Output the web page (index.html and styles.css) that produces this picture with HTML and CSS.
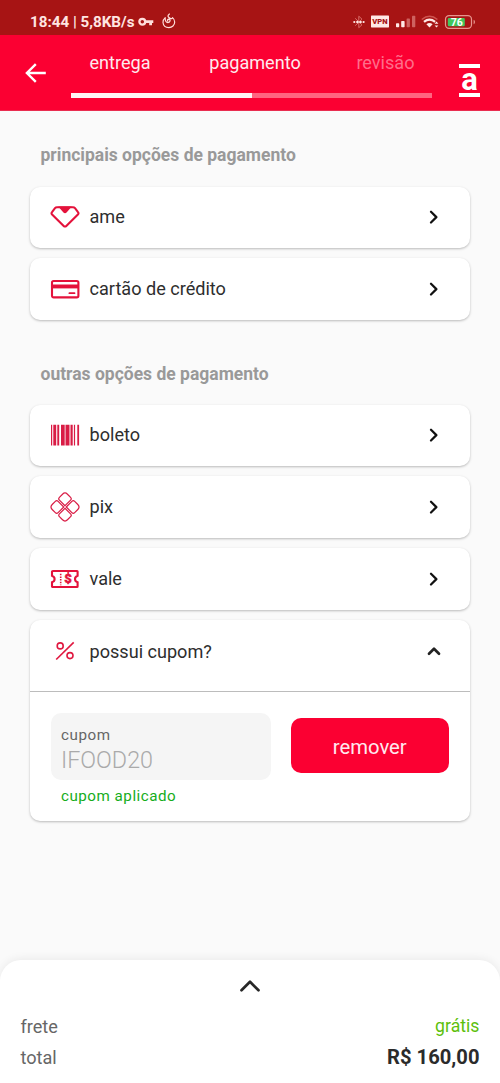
FILE: index.html
```html
<!DOCTYPE html>
<html lang="pt-BR">
<head>
<meta charset="utf-8">
<title>pagamento</title>
<link rel="stylesheet" href="styles.css">
</head>
<body>
<div class="screen">
  <div class="status">
    <span class="status-text">18:44 | 5,8KB/s</span>
    <svg class="key" width="16" height="10" viewBox="0 0 16 10"><path d="M7.6 3.3H15.3V6H14V8.2H11.2V6H7.6" fill="#ffdedb"/><circle cx="4.3" cy="4.7" r="2.9" fill="none" stroke="#ffdedb" stroke-width="2.3"/></svg>
    <svg class="flame" width="14" height="16" viewBox="0 0 14 16" fill="none" stroke="#ffdedb" stroke-width="1.2" stroke-linecap="round" stroke-linejoin="round"><path d="M7.4 1C5 2.8 5.8 4.2 8.6 5.6M3.2 4.6C1.6 6 .8 7.6 1 9.5 1.3 12.6 3.6 14.6 6.9 14.6c3.2 0 5.8-2.3 5.8-5.5 0-2.2-1-3.5-2.2-4.5-.2 1-.8 1.3-1.9 1M3.2 4.6C3 7.6 4 9.6 6 9.6c2.4 0 2.9-3.2.8-3.4-1.2 0-1.7 1-1 1.8"/></svg>
    <svg class="signals" width="124" height="18" viewBox="0 0 124 18">
      <path d="M2.2 5.3 9 11.8 5.8 14.7V3.2L9 6.2 2.2 12.7" fill="none" stroke="#d86a66" stroke-width="1"/>
      <g fill="#ffe9e6"><circle cx="1.3" cy="9" r="1.1"/><circle cx="4.4" cy="9" r="1.3"/><circle cx="7.5" cy="9" r="1.3"/><circle cx="10.6" cy="9" r="1.1"/>
      <rect x="18" y="2.6" width="18" height="11.8" rx=".6"/>
      <rect x="43" y="10.2" width="3.2" height="4" rx=".7"/><rect x="48.2" y="8" width="3.4" height="6.2" rx=".7"/></g>
      <text x="27" y="11.2" class="vpn">VPN</text>
      <g fill="#ce625f"><rect x="53.6" y="5.4" width="3.3" height="8.8" rx=".7"/><rect x="59" y="2.8" width="3.3" height="11.4" rx=".7"/></g>
      <g fill="none"><path d="M68.8 6.5Q76.5 0 84.4 6.5" stroke="#ce5550" stroke-width="1.6"/><path d="M71 8.8Q76.5 4.4 82.1 8.8" stroke="#ffe9e6" stroke-width="2.3"/><path d="M73.4 11.2Q76.5 8.6 79.6 11.2L76.5 14.5Z" fill="#ffe9e6"/></g>
      <path d="M81.6 10.7 83.5 8.6 85.4 10.7ZM81.6 12.5H85.4L83.5 14.6Z" fill="#ffe9e6"/>
      <rect x="92.5" y="2.6" width="26" height="12.7" rx="3.6" fill="none" stroke="#e7958e" stroke-width="1.2"/>
      <path d="M120.6 6.8Q122 7.2 122 9T120.6 11.2Z" fill="#e7958e"/>
      <rect x="94.8" y="4.9" width="17" height="8.3" rx="1.2" fill="#40c75c"/>
      <text x="103.7" y="12.7" class="battery">76</text>
    </svg>
  </div>

  <header class="header">
    <svg class="back" width="22" height="20" viewBox="0 0 22 20" fill="none" stroke="#fff" stroke-width="2.4"><path d="M20.8 10H2.2M10.8 1.1 1.9 10l8.9 8.9"/></svg>
    <div class="steps">
      <div class="labels"><span>entrega</span><span>pagamento</span><span class="pending">revisão</span></div>
      <div class="track"><div class="progress"></div></div>
    </div>
    <div class="brand"><span>a</span></div>
  </header>

  <main class="content">
    <h2 class="title">principais opções de pagamento</h2>
    <div class="card row">
      <svg class="icon" width="30" height="30" viewBox="0 0 30 30"><path d="M7 5.2H23Q24.2 5.2 25 6.1L28 10.1Q29 11.3 27.9 12.5L16.3 23.9Q15 25.2 13.7 23.9L2.1 12.5Q1 11.3 2 10.1L5 6.1Q5.8 5.2 7 5.2Z" fill="none" stroke="#e4123b" stroke-width="2.1"/><path d="M8.2 4.6H21.8L16.8 10.3Q15 12 13.2 10.3Z" fill="#e4123b"/></svg>
      <span>ame</span>
      <svg class="chevron" width="10" height="14" viewBox="0 0 10 14"><path d="M2 1.7 7.4 7.1 2 12.5"/></svg>
    </div>
    <div class="card row">
      <svg class="icon" width="30" height="30" viewBox="0 0 30 30"><rect x="2" y="7" width="26.4" height="16.4" rx="1.6" fill="none" stroke="#e4123b" stroke-width="2.1"/><path d="M2 10.5H28V14.4H2Z" fill="#e4123b"/><path d="M19.4 19.2H24.5" stroke="#e4123b" stroke-width="1.8" stroke-linecap="round"/></svg>
      <span>cartão de crédito</span>
      <svg class="chevron" width="10" height="14" viewBox="0 0 10 14"><path d="M2 1.7 7.4 7.1 2 12.5"/></svg>
    </div>

    <h2 class="title second">outras opções de pagamento</h2>
    <div class="card row">
      <svg class="icon" width="30" height="30" viewBox="0 0 30 30"><path d="M1 4.8h1.2v20.8H1zM3.3 4.8h2.9v20.8H3.3zM7.3 4.8h1.9v20.8H7.3zM11 4.8h3.7v20.8H11zM15.5 4.8h4v20.8h-4zM20.5 4.8h2.2v20.8h-2.2zM23.9 4.8h1.2v20.8h-1.2zM27.3 4.8h1.8v20.8h-1.8z" fill="#d91c45"/></svg>
      <span>boleto</span>
      <svg class="chevron" width="10" height="14" viewBox="0 0 10 14"><path d="M2 1.7 7.4 7.1 2 12.5"/></svg>
    </div>
    <div class="card row">
      <svg class="icon" width="30" height="30" viewBox="0 0 30 30">
        <defs><path id="petal" d="M.9 .9H8.8Q10.8 .9 10.8 2.9V7.3Q10.8 10.8 7.3 10.8H2.9Q.9 10.8 .9 8.8Z"/></defs>
        <g transform="translate(15 15)" fill="none" stroke="#d91c45" stroke-width="1.2"><use href="#petal" transform="rotate(45)"/><use href="#petal" transform="rotate(135)"/><use href="#petal" transform="rotate(225)"/><use href="#petal" transform="rotate(315)"/></g>
      </svg>
      <span>pix</span>
      <svg class="chevron" width="10" height="14" viewBox="0 0 10 14"><path d="M2 1.7 7.4 7.1 2 12.5"/></svg>
    </div>
    <div class="card row">
      <svg class="icon" width="30" height="30" viewBox="0 0 30 30"><path d="M3 7H27Q27.6 7 27.6 7.6V11.7Q25 12.6 25 15T27.6 18.3V22.4Q27.6 23 27 23H3Q2 23 2 22.4V18.3Q4.6 17.4 4.6 15T2 11.7V7.6Q2 7 3 7Z" fill="none" stroke="#e4123b" stroke-width="2.1"/><path d="M10.7 9.7V21.2" stroke="#e4123b" stroke-width="1.6" stroke-dasharray="1.5 1.2"/><text x="18" y="19.2" class="currency">$</text></svg>
      <span>vale</span>
      <svg class="chevron" width="10" height="14" viewBox="0 0 10 14"><path d="M2 1.7 7.4 7.1 2 12.5"/></svg>
    </div>
    <section class="card coupon">
      <div class="coupon-head">
        <svg class="icon" width="30" height="30" viewBox="0 0 30 30" fill="none" stroke="#e01840" stroke-width="1.6"><path d="M6.2 23.5 23.7 6.4"/><circle cx="10.2" cy="9.9" r="3"/><circle cx="20" cy="19.6" r="3"/></svg>
        <span>possui cupom?</span>
        <svg class="chevron-up" width="14" height="10" viewBox="0 0 14 10"><path d="M2 7.7 7 2.8 12 7.7"/></svg>
      </div>
      <div class="coupon-body">
        <div class="entry">
          <div class="field"><span class="field-label">cupom</span><span class="field-value">IFOOD20</span></div>
          <div class="applied">cupom aplicado</div>
        </div>
        <button class="remove">remover</button>
      </div>
    </section>
  </main>

  <footer class="summary">
    <svg class="expand" width="22" height="14" viewBox="0 0 22 14"><path d="M2.5 11.3 11 2.8l8.5 8.5"/></svg>
    <div class="line"><span>frete</span><span class="free">grátis</span></div>
    <div class="line"><span>total</span><strong>R$ 160,00</strong></div>
  </footer>
</div>
</body>
</html>
```
FILE: styles.css
```css
* { box-sizing: border-box; }
body { margin: 0; font-family: Roboto, "Liberation Sans", sans-serif; font-size: 18.1px; color: #2e2e2e; }
svg { display: block; flex: none; }
.screen { width: 500px; height: 1083px; background: #fafafa; display: flex; flex-direction: column; overflow: hidden; }
.status { height: 35px; flex: none; background: #a71414; display: flex; align-items: center; padding: 9px 25px 0 30px; }
.status-text { color: #ffe4e1; font-size: 15.2px; font-weight: 700; width: 108px; white-space: nowrap; }
.flame { margin-left: 8px; margin-top: -2px; }
.signals { margin-left: auto; margin-right: -2px; }
.vpn { font-size: 7.6px; font-weight: 900; fill: #a71414; text-anchor: middle; }
.battery { font-size: 10.5px; font-weight: 700; fill: #fff; text-anchor: middle; }
.header { height: 76px; flex: none; background: #fb0032; color: #ffe9ee; display: flex; padding: 0 20px 0 25px; border-bottom: 1px solid #e92d50; }
.back { margin-top: 28px; }
.steps { width: 361px; margin-left: 24px; }
.labels { display: flex; justify-content: space-between; padding: 17px 17.5px 0 18.5px; line-height: 22px; }
.labels span:nth-child(2) { margin-left: 3px; }
.pending { color: #ff6d8a; }
.track { height: 5px; margin-top: 19px; background: #ff6480; }
.progress { width: 50%; height: 5px; background: #fff3f5; }
.brand { width: 21px; height: 33px; margin: 29px 0 0 auto; border-top: 4px solid #fff; border-bottom: 4px solid #fff; color: #fff; font-size: 31px; font-weight: 700; line-height: 24px; display: flex; justify-content: center; }
.content { flex: 1; padding: 33px 30.5px 0 30px; }
.title { margin: 0 0 20.5px 10.5px; font-size: 17.5px; line-height: 22px; font-weight: 700; color: #999; }
.title.second { margin-top: 43px; margin-bottom: 20px; }
.card { background: #fff; border-radius: 10px; box-shadow: 0 1px 2.5px rgba(0,0,0,.26); margin-bottom: 10.2px; }
.row { height: 61.5px; display: flex; align-items: center; padding: 0 30.5px 0 19.5px; }
.row span, .coupon-head span { margin-left: 10px; margin-top: -1px; }
.chevron, .chevron-up { margin-left: auto; fill: none; stroke: #111; stroke-width: 2.2; stroke-linecap: round; stroke-linejoin: round; }
.chevron-up { stroke: #222; stroke-width: 2.7; }
.currency { font-size: 13px; font-weight: 900; fill: #e4123b; stroke: #e4123b; stroke-width: .5; text-anchor: middle; }
.coupon { height: 201px; }
.coupon-head { height: 72px; display: flex; align-items: center; padding: 0 28.5px 8px 19.5px; border-bottom: 1px solid #bcbcbc; }
.coupon-head span { margin-top: 1px; }
.coupon-body { display: flex; justify-content: space-between; padding: 21.5px 20.5px 0; }
.field { width: 220px; height: 66.5px; background: #f5f5f5; border-radius: 10px; padding: 13px 10.5px 0; display: flex; flex-direction: column; }
.field-label { font-size: 15.2px; line-height: 19px; letter-spacing: .55px; color: #666; }
.field-value { font-size: 23.3px; line-height: 31px; font-weight: 300; color: #aaa; }
.applied { margin: 6px 0 0 10.5px; font-size: 15.2px; line-height: 20px; letter-spacing: .5px; color: #16ad1b; }
.remove { width: 158.5px; height: 54.5px; margin-top: 5px; border: 0; border-radius: 10px; background: #fb0032; color: #ffe9ee; padding: 2px 0 0; font: 20.3px/24px Roboto, sans-serif; }
.summary { height: 123.5px; flex: none; background: #fff; border-radius: 21px 21px 0 0; box-shadow: 0 -1px 10px rgba(0,0,0,.07); padding: 19px 20.5px 0; }
.expand { margin: 0 auto 18px; fill: none; stroke: #272727; stroke-width: 2.7; stroke-linecap: round; stroke-linejoin: round; }
.line { height: 31px; display: flex; align-items: center; justify-content: space-between; color: #666; }
.free { color: #5cc00c; font-size: 17.7px; }
.line strong { color: #2b2b2b; font-size: 20.2px; }
```
